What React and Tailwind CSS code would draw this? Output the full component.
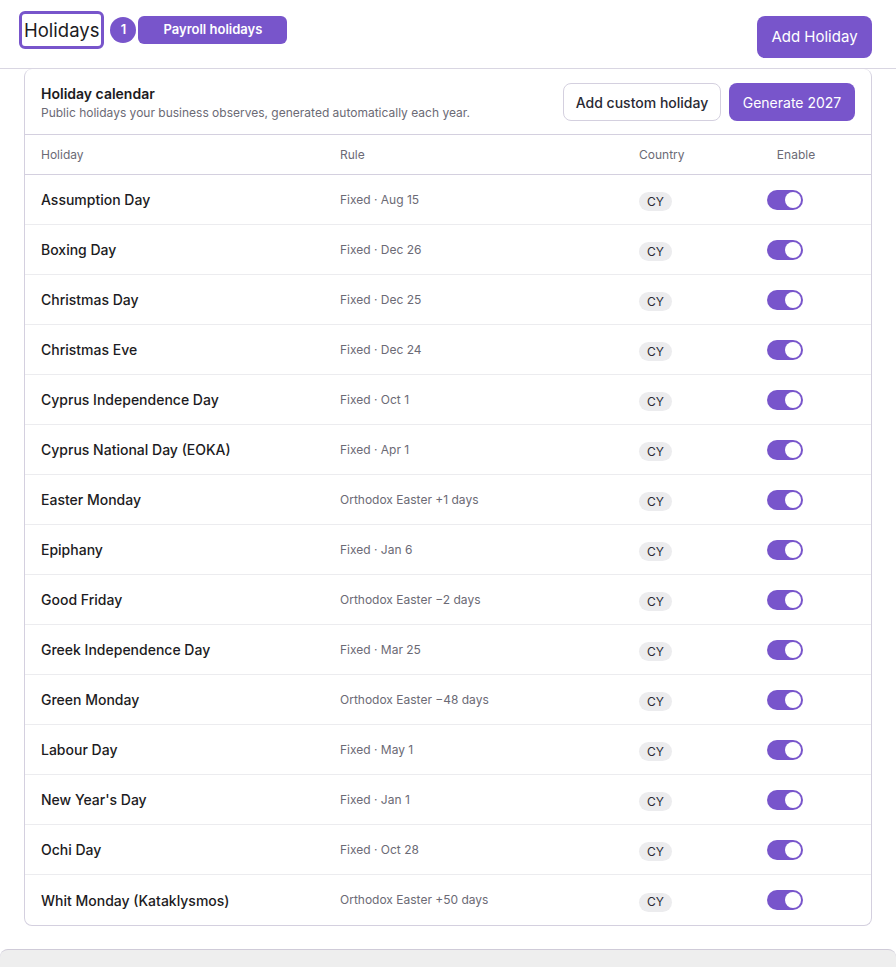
import React, { useState } from 'react';

const holidays = [
  { name: 'Assumption Day', rule: 'Fixed · Aug 15' },
  { name: 'Boxing Day', rule: 'Fixed · Dec 26' },
  { name: 'Christmas Day', rule: 'Fixed · Dec 25' },
  { name: 'Christmas Eve', rule: 'Fixed · Dec 24' },
  { name: 'Cyprus Independence Day', rule: 'Fixed · Oct 1' },
  { name: 'Cyprus National Day (EOKA)', rule: 'Fixed · Apr 1' },
  { name: 'Easter Monday', rule: 'Orthodox Easter +1 days' },
  { name: 'Epiphany', rule: 'Fixed · Jan 6' },
  { name: 'Good Friday', rule: 'Orthodox Easter −2 days' },
  { name: 'Greek Independence Day', rule: 'Fixed · Mar 25' },
  { name: 'Green Monday', rule: 'Orthodox Easter −48 days' },
  { name: 'Labour Day', rule: 'Fixed · May 1' },
  { name: "New Year's Day", rule: 'Fixed · Jan 1' },
  { name: 'Ochi Day', rule: 'Fixed · Oct 28' },
  { name: 'Whit Monday (Kataklysmos)', rule: 'Orthodox Easter +50 days' },
];

const Toggle = ({ on, onChange }) => (
  <button
    type="button"
    onClick={onChange}
    className={`flex h-5 w-9 items-center rounded-full p-[2px] ${on ? 'justify-end bg-[#7855cb]' : 'justify-start bg-[#d6d3de]'}`}
  >
    <span className="block h-4 w-4 rounded-full bg-white" />
  </button>
);

const App = () => {
  const [enabled, setEnabled] = useState(holidays.map(() => true));

  const toggle = (i) => {
    setEnabled((prev) => prev.map((v, idx) => (idx === i ? !v : v)));
  };

  return (
    <div className="min-h-screen bg-white font-['Inter','Liberation_Sans',sans-serif] text-[#1c1b22]">
      {/* page header */}
      <div className="flex items-start justify-between border-b border-[#d9d6e2] pl-[19px] pr-[24px] pt-[11px] pb-[10px]">
        <div className="flex items-center">
          <div className="flex h-[38px] items-center rounded-md border-[3px] border-[#7855cb] px-[2px] text-[18.5px] leading-none text-[#1c1b22]">
            Holidays
          </div>
          <span className="ml-[6px] flex h-[26px] w-[26px] items-center justify-center rounded-full bg-[#7855cb] text-[13px] font-semibold text-white">
            1
          </span>
          <span className="ml-[2px] flex h-[28px] w-[149px] items-center justify-center rounded-md bg-[#7855cb] text-[13px] font-semibold text-white">
            Payroll holidays
          </span>
        </div>
        <button className="mt-[5px] h-[42px] w-[115px] rounded-lg bg-[#7855cb] text-[15px] text-white">
          Add Holiday
        </button>
      </div>

      {/* card */}
      <div className="mx-[24px] overflow-hidden rounded-lg border border-t-0 border-[#d4d0df]">
        <div className="flex items-center justify-between border-b border-[#d4d0df] pt-[14px] pb-[13px] pl-[16px] pr-[16px]">
          <div>
            <div className="text-[14px] font-semibold leading-[20px] text-[#1c1b22]">Holiday calendar</div>
            <div className="mt-[1px] text-[12px] leading-[16px] text-[#6b6a75]">
              Public holidays your business observes, generated automatically each year.
            </div>
          </div>
          <div className="flex gap-[8px]">
            <button className="h-[38px] w-[158px] rounded-lg border border-[#d4d0df] bg-white text-[14px] font-medium text-[#2a2933]">
              Add custom holiday
            </button>
            <button className="h-[38px] w-[126px] rounded-lg bg-[#7855cb] text-[14px] text-white">
              Generate 2027
            </button>
          </div>
        </div>

        <div className="grid h-[40px] grid-cols-[299px_299px_98px_1fr] items-center border-b border-[#d4d0df] text-[12px] text-[#6b6a75]">
          <div className="pl-[16px]">Holiday</div>
          <div className="pl-[16px]">Rule</div>
          <div className="pl-[16px]">Country</div>
          <div className="text-center">Enable</div>
        </div>

        {holidays.map((h, i) => (
          <div
            key={h.name}
            className={`grid h-[50px] grid-cols-[299px_299px_98px_1fr] items-center ${i < holidays.length - 1 ? 'border-b border-[#ececef]' : ''}`}
          >
            <div className="pl-[16px] text-[14px] font-medium text-[#1c1b22]">{h.name}</div>
            <div className="pl-[16px] text-[12px] text-[#6b6a75]">{h.rule}</div>
            <div className="pl-[16px]">
              <span className="inline-flex h-[19px] items-center rounded-full bg-[#ececee] px-[8px] text-[12px] text-[#2a2933]">
                CY
              </span>
            </div>
            <div className="pl-[46px]">
              <Toggle on={enabled[i]} onChange={() => toggle(i)} />
            </div>
          </div>
        ))}
      </div>

      {/* bottom bar */}
      <div className="mt-[23px] h-[60px] rounded-t-lg border-t border-[#cfcbd8] bg-[#eeeeee] px-[28px] pt-[14px] text-[12px] text-[#6b6a75]">
        <div className="grid grid-cols-[547px_1fr]">
          <span>Name</span>
          <span>Date</span>
        </div>
      </div>
    </div>
  );
};

export default App;
